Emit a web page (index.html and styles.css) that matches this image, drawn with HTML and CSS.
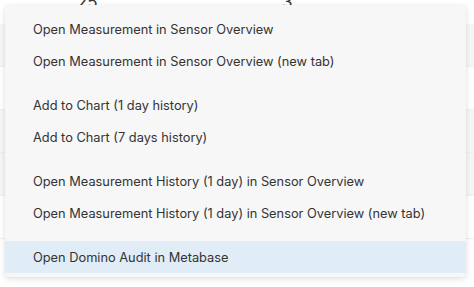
FILE: index.html
```html
<!DOCTYPE html>
<html>
<head>
<meta charset="utf-8">
<link rel="stylesheet" href="styles.css">
</head>
<body>
<div class="table">
  <div class="head-row"><span class="c1">25</span><span class="c2">3</span></div>
  <div class="row shade"></div>
  <div class="row"></div>
  <div class="row shade"></div>
  <div class="row shade"></div>
  <div class="row"></div>
</div>
<div class="menu">
  <div class="item">Open Measurement in Sensor Overview</div>
  <div class="item">Open Measurement in Sensor Overview (new tab)</div>
  <div class="sep"></div>
  <div class="item">Add to Chart (1 day history)</div>
  <div class="item">Add to Chart (7 days history)</div>
  <div class="sep"></div>
  <div class="item">Open Measurement History (1 day) in Sensor Overview</div>
  <div class="item">Open Measurement History (1 day) in Sensor Overview (new tab)</div>
  <div class="sep"></div>
  <div class="item active">Open Domino Audit in Metabase</div>
</div>
</body>
</html>
```
FILE: styles.css
```css
html, body {
  margin: 0;
  padding: 0;
  background: #ffffff;
  overflow: hidden;
  width: 474px;
  height: 287px;
}
body {
  position: relative;
  font-family: Inter, "Noto Sans", sans-serif;
}
.table {
  display: flex;
  flex-direction: column;
}
.head-row {
  height: 24px;
  position: relative;
  font-size: 17px;
  color: #333;
}
.head-row span {
  position: absolute;
  top: -8px;
}
.c1 { left: 77px; }
.c2 { left: 282px; }
.row {
  height: 42px;
  border-bottom: 1px solid #f0f0f0;
}
.row.shade { background: #f6f6f6; }
.menu {
  position: absolute;
  left: 5px;
  top: 5px;
  width: 461px;
  box-sizing: border-box;
  padding: 8px 0 4px;
  background: #f7f7f7;
  border-radius: 4px;
  box-shadow: 0 2px 6px rgba(0, 0, 0, 0.12), 0 0 2px rgba(0, 0, 0, 0.06);
}
.item {
  height: 32px;
  line-height: 33px;
  padding-left: 28px;
  font-size: 12.8px;
  color: #333333;
  white-space: nowrap;
}
.item.active { background: #e1edf6; }
.sep { height: 12px; }
```
